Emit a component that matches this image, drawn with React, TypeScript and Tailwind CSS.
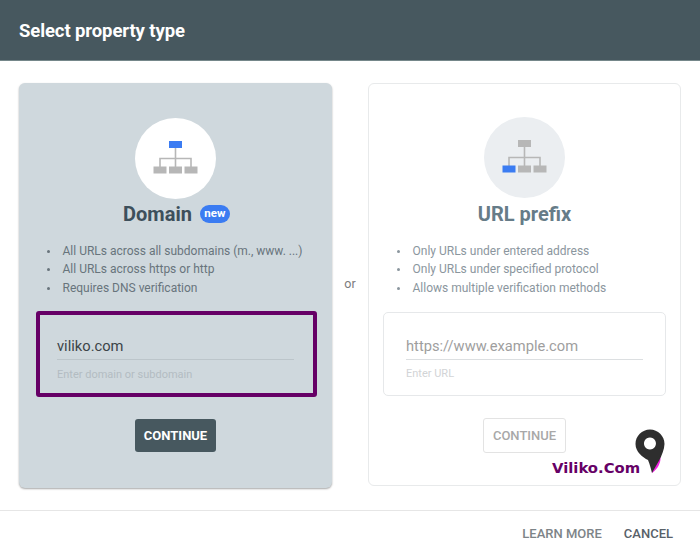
const font = { fontFamily: "Roboto, sans-serif" };

const TreeIcon = ({active}: {active: "top" | "left"}) => {
    const blue = "#3b7cf2";
    const gray = "#b7b7b7";
    return (
        <svg width="46" height="36" viewBox="0.5 1 46 36">
            <path d="M23 8V27M7.5 27V18.5H38.5V27" fill="none" stroke={gray} strokeWidth="1.6"/>
            <rect x="16.5" y="0.5" width="13" height="7.5" fill={active === "top" ? blue : gray}/>
            <rect x="1" y="26.5" width="13" height="7" fill={active === "left" ? blue : gray}/>
            <rect x="16.5" y="26.5" width="13" height="7" fill={gray}/>
            <rect x="32" y="26.5" width="13" height="7" fill={gray}/>
        </svg>
    );
};

const Bullets = ({items, className}: {items: string[], className: string}) => (
    <ul className={`w-full list-none text-[12px] leading-[18.4px] ${className}`}>
        {items.map((item) => (
            <li key={item} className="flex items-center">
                <span className="w-[3px] h-[3px] rounded-full bg-current mr-[12.5px]"></span>
                {item}
            </li>
        ))}
    </ul>
);

const App = () => {
    return (
        <div className="w-[700px] h-[556px] bg-white flex flex-col overflow-hidden relative" style={font}>
            <div className="h-[61px] shrink-0 bg-[#47585f] border-b border-[#75878a] flex items-center px-[19px] pt-[3px]">
                <span className="text-white font-bold text-[18.5px] tracking-[-0.1px]">Select property type</span>
            </div>

            <div className="flex items-start px-[19px] pt-[22px] h-[449px] shrink-0">
                <div className="w-[313px] h-[405px] shrink-0 rounded-[6px] bg-[#cfd8dd] shadow-[0_1px_2px_rgba(0,0,0,0.35)] flex flex-col items-center pt-[35px]">
                    <div className="w-[81px] h-[81px] rounded-full bg-white flex items-center justify-center">
                        <TreeIcon active="top"/>
                    </div>
                    <div className="flex items-center justify-center h-[30px] ml-[2px]">
                        <span className="text-[20px] font-bold text-[#3d4f5b] leading-none">Domain</span>
                        <span className="ml-[8px] w-[30px] h-[18px] rounded-full bg-[#3b7cf2] text-white text-[11.5px] font-bold flex items-center justify-center">new</span>
                    </div>
                    <Bullets
                        className="text-[#68747c] pl-[28px] mt-[13px]"
                        items={["All URLs across all subdomains (m., www. ...)", "All URLs across https or http", "Requires DNS verification"]}
                    />
                    <div className="w-[281px] h-[86px] mt-[14px] ml-[2px] border-[4px] border-[#660066] rounded-[3px] pl-[17px] pr-[19px] pt-[20px]">
                        <div className="text-[14.7px] leading-[22px] text-[#3c4448] border-b border-[#bcc5ca] h-[25px]">viliko.com</div>
                        <div className="text-[11px] leading-[14px] text-[#b3bcc2] mt-[8px]">Enter domain or subdomain</div>
                    </div>
                    <button className="w-[81px] h-[33px] mt-[22px] rounded-[3px] bg-[#47585f] text-white text-[13px] font-bold">CONTINUE</button>
                </div>

                <div className="w-[36px] shrink-0 h-[405px] flex items-center justify-center text-[12.5px] text-[#7c7c7c] pb-[3px]">or</div>

                <div className="w-[313px] h-[403px] shrink-0 rounded-[6px] bg-white border border-[#e8eaeb] flex flex-col items-center pt-[33px]">
                    <div className="w-[81px] h-[81px] rounded-full bg-[#ebeef1] flex items-center justify-center">
                        <TreeIcon active="left"/>
                    </div>
                    <div className="flex items-center justify-center h-[32px]">
                        <span className="text-[20px] font-bold text-[#667c88] leading-none">URL prefix</span>
                    </div>
                    <Bullets
                        className="text-[#8b969e] pl-[28px] mt-[12px]"
                        items={["Only URLs under entered address", "Only URLs under specified protocol", "Allows multiple verification methods"]}
                    />
                    <div className="w-[283px] h-[84px] mt-[15px] border border-[#e6e8ea] rounded-[5px] px-[22px] pt-[22px]">
                        <div className="text-[14.7px] leading-[22px] text-[#9e9e9e] border-b border-[#dcdfe1] h-[25px]">https://www.example.com</div>
                        <div className="text-[11px] leading-[14px] text-[#d2d4d6] mt-[7px]">Enter URL</div>
                    </div>
                    <button className="w-[83px] h-[35px] mt-[22px] rounded-[3px] bg-white border border-[#e3e3e3] text-[#a8a8a8] text-[13px] font-medium">CONTINUE</button>
                </div>
            </div>

            <div className="flex-1 border-t border-[#e6e6e6] flex items-start justify-end pr-[27px] pt-[15px] text-[13px] font-medium leading-[16px]">
                <span className="text-[#7d8488] mr-[22px]">LEARN MORE</span>
                <span className="text-[#586169]">CANCEL</span>
            </div>

            {/* watermark */}
            <div className="absolute left-[552px] top-[429px] flex items-end">
                <span className="text-[#660066] font-bold text-[14.8px] leading-[18px] mb-[-3px]" style={{fontFamily: "'DejaVu Sans', sans-serif"}}>Viliko.Com</span>
                <svg width="32" height="45" viewBox="0 0 32 45" className="ml-[-6px]">
                    <path d="M26 26C28 32 24 40 18 44L17 30Z" fill="#f020e0"/>
                    <path fillRule="evenodd" d="M16 0.5C8 0.5 1.5 7 1.5 15C1.5 23 9 28.5 14 31C16 36 17 40 18 44C21 38 30 26 30.5 15C30.5 7 24 0.5 16 0.5ZM16 8.5A6 6 0 1 1 15.9 8.5Z" fill="#2e2e2e"/>
                </svg>
            </div>
        </div>
    );
};

export default App;
